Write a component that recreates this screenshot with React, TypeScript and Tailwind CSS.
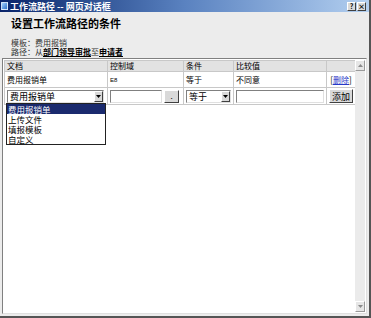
const cjk = "font-['Noto_Sans_CJK_SC','Noto_Sans',sans-serif]";

const raised = "border border-t-white border-l-white border-r-[#404040] border-b-[#404040] bg-[#d9d9d9]";
const sunken = "border border-t-[#808080] border-l-[#808080] border-r-[#e0e0e0] border-b-[#e0e0e0] bg-white";

function DownArrow({ color = "#000" }: { color?: string }) {
  return (
    <svg width="5" height="3" viewBox="0 0 5 3">
      <path d="M0 0h5L2.5 3z" fill={color} />
    </svg>
  );
}

function Select({ value, width }: { value: string; width: string }) {
  return (
    <div className={`flex items-center h-[13px] ${width} ${sunken} pl-[2px] text-[9px] leading-none`}>
      <span>{value}</span>
      <span className={`ml-auto flex items-center justify-center w-[9px] h-[11px] ${raised}`}>
        <DownArrow />
      </span>
    </div>
  );
}

export default function App() {
  const options = ["费用报销单", "上传文件", "填报模板", "自定义"];
  const cell = "border-r border-b border-[#c8c8c8] px-[2px] flex items-center";

  return (
    <div className={`w-[371px] h-[318px] bg-[#ececec] ${cjk} text-black overflow-hidden flex flex-col border-r-2 border-b-2 border-[#555]`}>
      {/* Title bar */}
      <div className="flex items-center h-[12px] shrink-0 pl-[1px] pr-[3px] bg-gradient-to-r from-[#0a246a] via-[#5a82c0] to-[#b4d0f0]">
        <span className="w-[7px] h-[8px] mr-[2px] bg-gradient-to-br from-[#9fd0ff] to-[#2f6fc4] border border-white/70" />
        <span className="text-white font-bold text-[9px] leading-none">工作流路径 -- 网页对话框</span>
        <div className="ml-auto flex gap-[1px]">
          <span className={`flex items-center justify-center w-[9px] h-[9px] ${raised} text-[7px] font-bold leading-none`}>?</span>
          <span className={`flex items-center justify-center w-[9px] h-[9px] ${raised} text-[7px] font-bold leading-none`}>×</span>
        </div>
      </div>

      {/* Heading */}
      <div className="pl-[11px] pt-[5px] shrink-0">
        <h1 className="text-[11px] font-bold leading-[12px]">设置工作流路径的条件</h1>
        <div className="mt-[9px] text-[8px] leading-[9px] text-[#333]">模板：费用报销</div>
        <div className="text-[8px] leading-[9px] text-[#333]">
          路径：从<span className="font-bold underline text-black">部门领导审批</span>至<span className="font-bold underline text-black">申请者</span>
        </div>
      </div>

      {/* Content area */}
      <div className={`flex flex-1 mt-[2px] mx-[2px] mb-[2px] ${sunken}`}>
        <div className="flex-1 pl-[1px] pt-[1px] text-[8px] leading-none">
          <div className="grid grid-cols-[103px_76px_50px_93px_29px] w-[351px] border-l border-t border-[#c8c8c8]">
            {/* Header */}
            <div className={`${cell} h-[11px] bg-[#e2e2e2]`}>文档</div>
            <div className={`${cell} h-[11px] bg-[#e2e2e2]`}>控制域</div>
            <div className={`${cell} h-[11px] bg-[#e2e2e2]`}>条件</div>
            <div className={`${cell} h-[11px] bg-[#e2e2e2]`}>比较值</div>
            <div className={`${cell} h-[11px] bg-[#e2e2e2]`} />

            {/* Existing condition */}
            <div className={`${cell} h-[16px]`}>费用报销单</div>
            <div className={`${cell} h-[16px] text-[6px] font-['Liberation_Sans',sans-serif]`}>E8</div>
            <div className={`${cell} h-[16px]`}>等于</div>
            <div className={`${cell} h-[16px]`}>不同意</div>
            <div className={`${cell} h-[16px] justify-center`}>
              [<span className="text-[#2838c8] underline">删除</span>]
            </div>

            {/* Input row */}
            <div className={`${cell} h-[17px] relative`}>
              <Select value="费用报销单" width="w-[97px]" />
              <div className="absolute left-[1px] top-[15px] w-[100px] bg-white border border-[#222] z-10 text-[8.5px]">
                {options.map((o, i) => (
                  <div
                    key={o}
                    className={`h-[10px] leading-[10px] pl-[1px] ${i === 0 ? "bg-[#1a2a6e] text-white" : ""}`}
                  >
                    {o}
                  </div>
                ))}
              </div>
            </div>
            <div className={`${cell} h-[17px] gap-[2px]`}>
              <div className={`h-[13px] w-[52px] ${sunken}`} />
              <span className={`flex items-center justify-center w-[15px] h-[13px] ${raised} text-[8px]`}>.</span>
            </div>
            <div className={`${cell} h-[17px]`}>
              <Select value="等于" width="w-[45px]" />
            </div>
            <div className={`${cell} h-[17px]`}>
              <div className={`h-[13px] w-[89px] ${sunken}`} />
            </div>
            <div className={`${cell} h-[17px] px-[1px]`}>
              <span className={`flex items-center justify-center w-[24px] h-[14px] ${raised} text-[9px]`}>添加</span>
            </div>
          </div>
        </div>

        {/* Scrollbar */}
        <div className="flex flex-col w-[11px] my-[1px] mr-[1px] bg-[#ebebeb]">
          <span className="flex items-center justify-center h-[11px] bg-[#e6e6e6] border border-t-white border-l-white border-r-[#9a9a9a] border-b-[#9a9a9a]">
            <svg width="5" height="3" viewBox="0 0 5 3"><path d="M0 3h5L2.5 0z" fill="#8a8a8a" /></svg>
          </span>
          <div className="flex-1" />
          <span className="flex items-center justify-center h-[11px] bg-[#e6e6e6] border border-t-white border-l-white border-r-[#9a9a9a] border-b-[#9a9a9a]">
            <DownArrow color="#8a8a8a" />
          </span>
        </div>
      </div>
    </div>
  );
}
